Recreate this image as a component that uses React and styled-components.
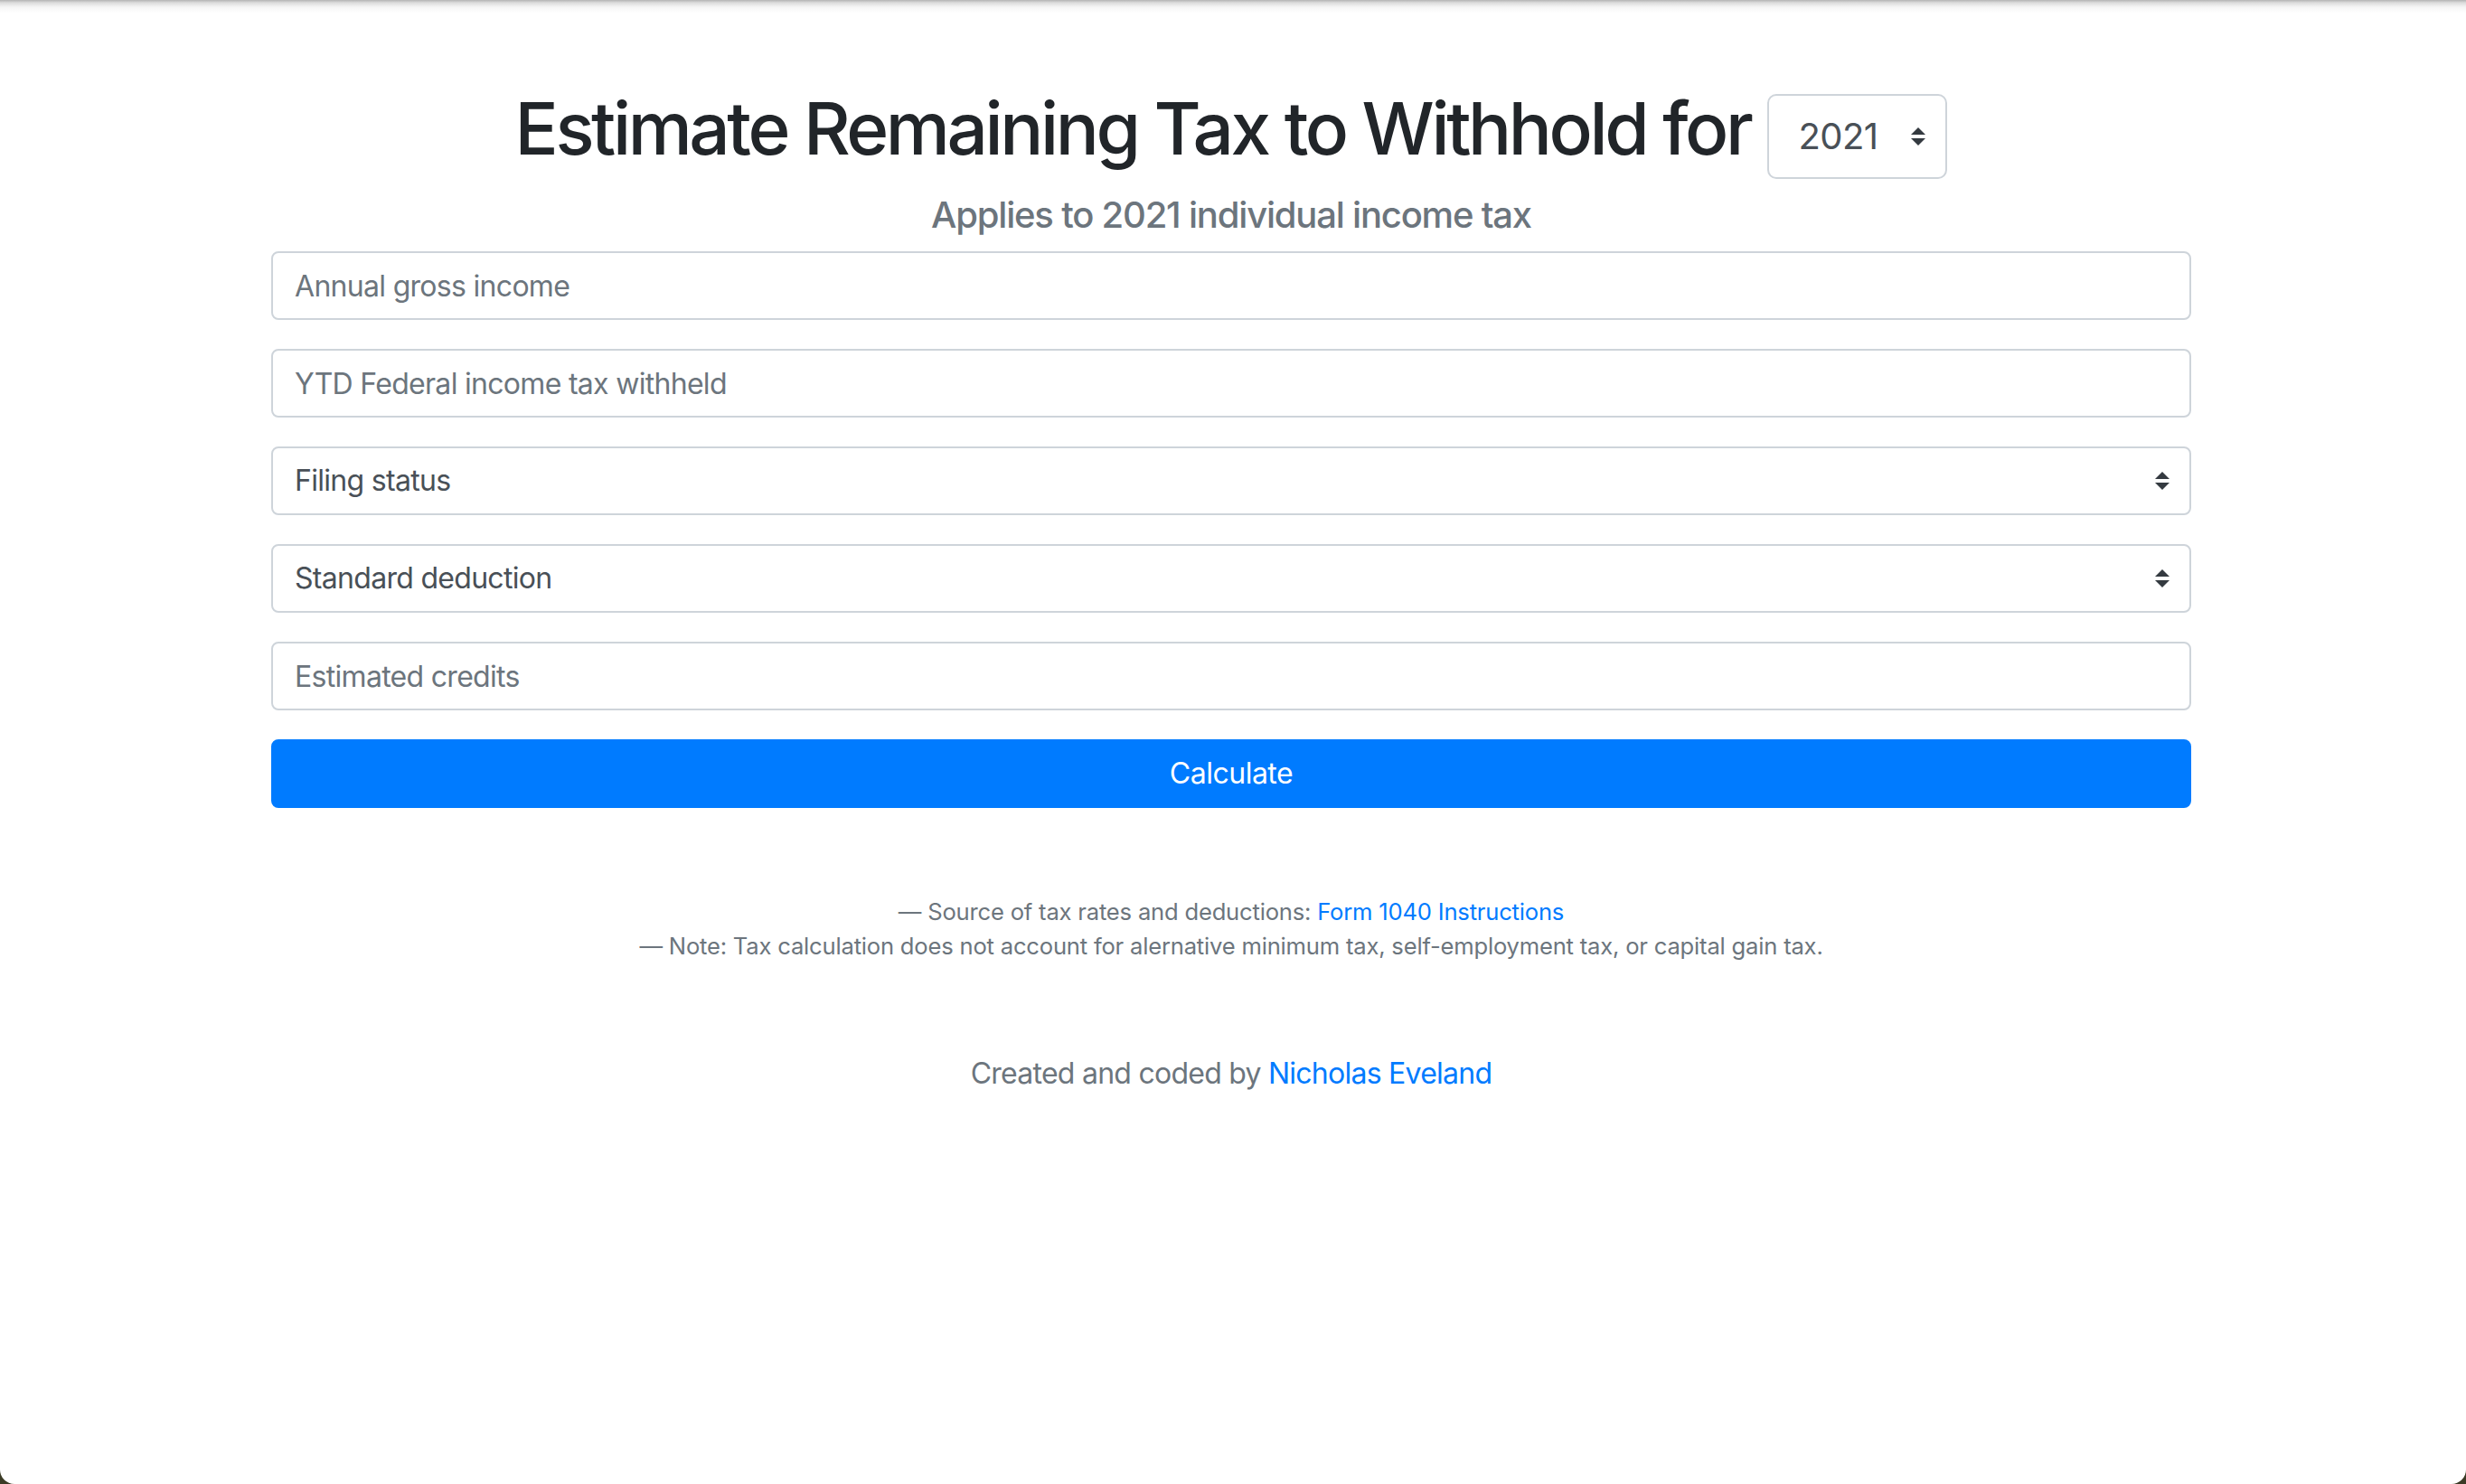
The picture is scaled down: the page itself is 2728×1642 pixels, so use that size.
import React, { useState } from "react";
import styled, { createGlobalStyle } from "styled-components";

const GlobalStyle = createGlobalStyle`
  html, body {
    margin: 0;
    padding: 0;
    background: #3b3b26;
  }
  body {
    font-family: Inter, "Liberation Sans", sans-serif;
    -webkit-font-smoothing: antialiased;
  }
  * {
    box-sizing: border-box;
  }
`;

const Page = styled.div`
  width: 2728px;
  height: 1642px;
  overflow: hidden;
  background: linear-gradient(
    to bottom,
    #b3b3b3 0px,
    #dcdcdc 3px,
    #f6f6f6 8px,
    #ffffff 14px
  );
  border-radius: 0 0 16px 16px;
  padding: 94px 4px 0 0;
`;

const Container = styled.main`
  width: 2124px;
  margin: 0 auto;
  display: flex;
  flex-direction: column;
`;

const TitleRow = styled.div`
  display: flex;
  align-items: center;
  justify-content: center;
  gap: 19px;
`;

const Title = styled.h1`
  margin: 0 0 17px;
  font-size: 80px;
  font-weight: 500;
  line-height: 1.2;
  color: #212529;
  letter-spacing: -3.4px;
`;

const SelectWrap = styled.div`
  position: relative;
  width: ${({ $width }) => $width || "100%"};
`;

const Select = styled.select`
  display: block;
  width: 100%;
  height: ${({ $large }) => ($large ? "94px" : "76px")};
  padding: ${({ $large }) => ($large ? "0 64px 0 32px" : "0 64px 0 24px")};
  font-family: inherit;
  font-size: ${({ $large }) => ($large ? "40px" : "32px")};
  font-weight: 400;
  line-height: 1.5;
  letter-spacing: ${({ $large }) => ($large ? "-0.6px" : "-0.7px")};
  color: #495057;
  background: #fff;
  border: 2px solid #ced4da;
  border-radius: ${({ $large }) => ($large ? "10px" : "8px")};
  appearance: none;
  -webkit-appearance: none;
  outline: none;
`;

const Caret = styled.svg`
  position: absolute;
  top: 50%;
  right: 24px;
  width: 16px;
  height: 20px;
  margin-top: -10px;
  pointer-events: none;
`;

const Subtitle = styled.h5`
  margin: 7px 0 16px;
  text-align: center;
  font-size: 40px;
  font-weight: 500;
  line-height: 1.2;
  color: #6c757d;
  letter-spacing: -1.2px;
`;

const Form = styled.form`
  display: flex;
  flex-direction: column;
  gap: 32px;
`;

const Input = styled.input`
  display: block;
  width: 100%;
  height: 76px;
  padding: 12px 24px;
  font-family: inherit;
  font-size: 32px;
  line-height: 1.5;
  letter-spacing: -0.7px;
  color: #495057;
  background: #fff;
  border: 2px solid #ced4da;
  border-radius: 8px;
  outline: none;
  &::placeholder {
    color: #6c757d;
    opacity: 1;
  }
`;

const Button = styled.button`
  display: block;
  width: 100%;
  height: 76px;
  font-family: inherit;
  font-size: 32px;
  line-height: 1.5;
  letter-spacing: -0.5px;
  color: #fff;
  background: #007bff;
  border: 2px solid #007bff;
  border-radius: 8px;
  cursor: pointer;
`;

const Notes = styled.section`
  margin-top: 96px;
  display: flex;
  flex-direction: column;
  align-items: center;
  font-size: 25.6px;
  line-height: 38.4px;
  letter-spacing: -0.2px;
  color: #6c757d;
`;

const Note = styled.small`
  font-size: inherit;
`;

const Link = styled.a`
  color: #007bff;
  text-decoration: none;
`;

const Credit = styled.p`
  margin: 97px 0 0;
  text-align: center;
  font-size: 32px;
  line-height: 1.5;
  letter-spacing: -0.75px;
  color: #6c757d;
`;

const Arrows = () => (
  <Caret viewBox="0 0 4 5" aria-hidden="true">
    <path fill="#343a40" d="M2 0L0 2h4zm0 5L0 3h4z" />
  </Caret>
);

export default function App() {
  const [year, setYear] = useState("2021");

  return (
    <Page>
      <GlobalStyle />
      <Container>
        <TitleRow>
          <Title>Estimate Remaining Tax to Withhold for</Title>
          <SelectWrap $width="199px">
            <Select $large value={year} onChange={(e) => setYear(e.target.value)}>
              <option value="2021">2021</option>
              <option value="2020">2020</option>
            </Select>
            <Arrows />
          </SelectWrap>
        </TitleRow>
        <Subtitle>Applies to {year} individual income tax</Subtitle>

        <Form onSubmit={(e) => e.preventDefault()}>
          <Input type="text" placeholder="Annual gross income" />
          <Input type="text" placeholder="YTD Federal income tax withheld" />
          <SelectWrap>
            <Select defaultValue="">
              <option value="">Filing status</option>
              <option value="single">Single</option>
              <option value="joint">Married filing jointly</option>
            </Select>
            <Arrows />
          </SelectWrap>
          <SelectWrap>
            <Select defaultValue="">
              <option value="">Standard deduction</option>
              <option value="itemized">Itemized deduction</option>
            </Select>
            <Arrows />
          </SelectWrap>
          <Input type="text" placeholder="Estimated credits" />
          <Button type="submit">Calculate</Button>
        </Form>

        <Notes>
          <Note>
            — Source of tax rates and deductions:{" "}
            <Link href="#">Form 1040 Instructions</Link>
          </Note>
          <Note>
            — Note: Tax calculation does not account for alernative minimum tax,
            self-employment tax, or capital gain tax.
          </Note>
        </Notes>

        <Credit>
          Created and coded by <Link href="#">Nicholas Eveland</Link>
        </Credit>
      </Container>
    </Page>
  );
}
